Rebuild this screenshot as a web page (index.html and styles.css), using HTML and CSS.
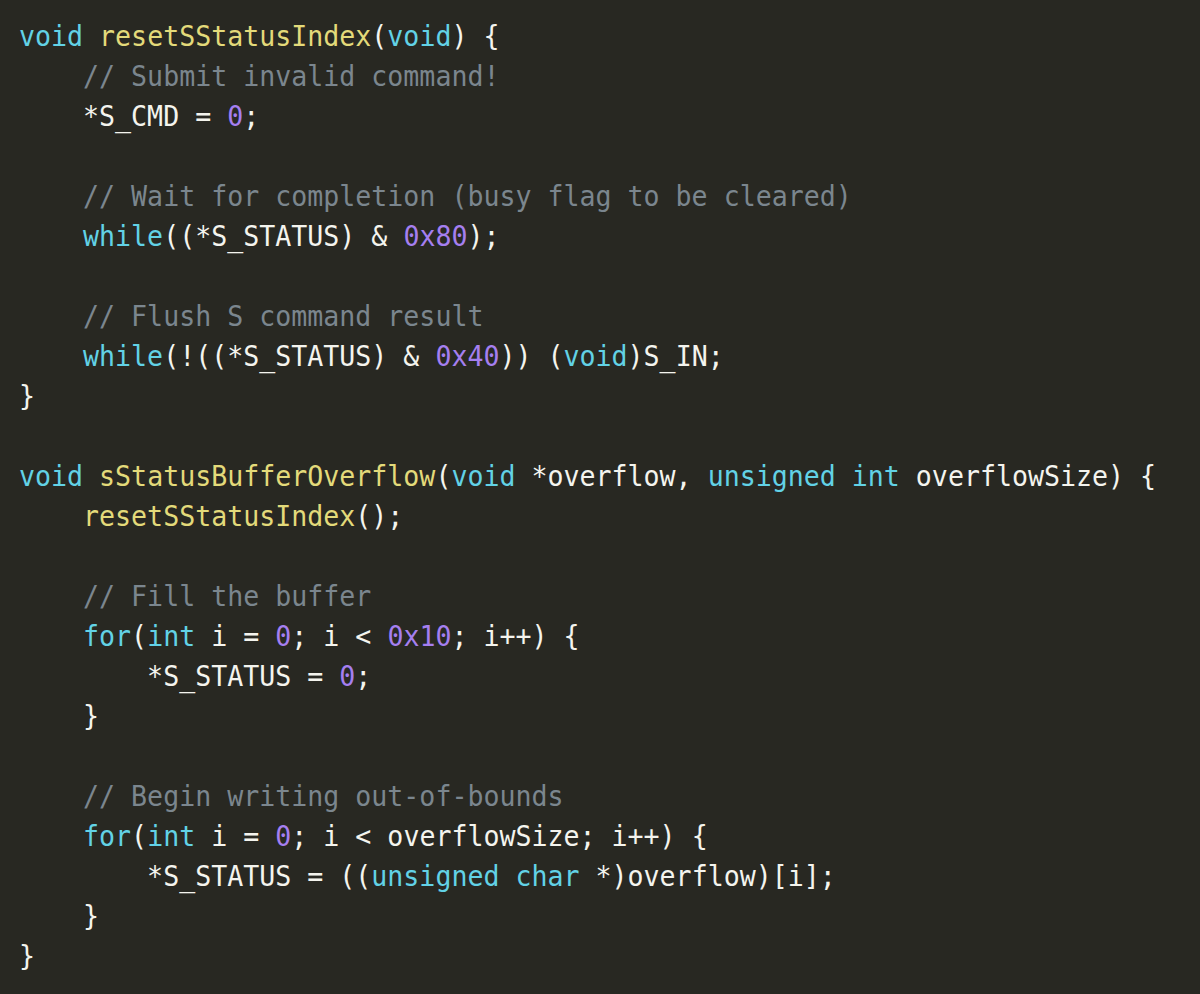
FILE: index.html
```html
<!DOCTYPE html>
<html>
<head>
<meta charset="utf-8">
<link rel="stylesheet" href="styles.css">
</head>
<body>
<div class="code">
<div class="ln"><span class="kw">void</span><span class="p"> </span><span class="fn">resetSStatusIndex</span><span class="p">(</span><span class="kw">void</span><span class="p">) {</span></div>
<div class="ln"><span class="p">    </span><span class="cm">// Submit invalid command!</span></div>
<div class="ln"><span class="p">    *S_CMD = </span><span class="num">0</span><span class="p">;</span></div>
<div class="ln"></div>
<div class="ln"><span class="p">    </span><span class="cm">// Wait for completion (busy flag to be cleared)</span></div>
<div class="ln"><span class="p">    </span><span class="kw">while</span><span class="p">((*S_STATUS) &amp; </span><span class="num">0x80</span><span class="p">);</span></div>
<div class="ln"></div>
<div class="ln"><span class="p">    </span><span class="cm">// Flush S command result</span></div>
<div class="ln"><span class="p">    </span><span class="kw">while</span><span class="p">(!((*S_STATUS) &amp; </span><span class="num">0x40</span><span class="p">)) (</span><span class="kw">void</span><span class="p">)S_IN;</span></div>
<div class="ln"><span class="p">}</span></div>
<div class="ln"></div>
<div class="ln"><span class="kw">void</span><span class="p"> </span><span class="fn">sStatusBufferOverflow</span><span class="p">(</span><span class="kw">void</span><span class="p"> *overflow, </span><span class="kw">unsigned</span><span class="p"> </span><span class="kw">int</span><span class="p"> overflowSize) {</span></div>
<div class="ln"><span class="p">    </span><span class="fn">resetSStatusIndex</span><span class="p">();</span></div>
<div class="ln"></div>
<div class="ln"><span class="p">    </span><span class="cm">// Fill the buffer</span></div>
<div class="ln"><span class="p">    </span><span class="kw">for</span><span class="p">(</span><span class="kw">int</span><span class="p"> i = </span><span class="num">0</span><span class="p">; i &lt; </span><span class="num">0x10</span><span class="p">; i++) {</span></div>
<div class="ln"><span class="p">        *S_STATUS = </span><span class="num">0</span><span class="p">;</span></div>
<div class="ln"><span class="p">    }</span></div>
<div class="ln"></div>
<div class="ln"><span class="p">    </span><span class="cm">// Begin writing out-of-bounds</span></div>
<div class="ln"><span class="p">    </span><span class="kw">for</span><span class="p">(</span><span class="kw">int</span><span class="p"> i = </span><span class="num">0</span><span class="p">; i &lt; overflowSize; i++) {</span></div>
<div class="ln"><span class="p">        *S_STATUS = ((</span><span class="kw">unsigned</span><span class="p"> </span><span class="kw">char</span><span class="p"> *)overflow)[i];</span></div>
<div class="ln"><span class="p">    }</span></div>
<div class="ln"><span class="p">}</span></div>
</div>
</body>
</html>
```

FILE: styles.css
```css
html, body {
  margin: 0;
  padding: 0;
  background: #282822;
  height: 100%;
}
.code {
  padding: 17px 0 0 20px;
  font-family: "DejaVu Sans Mono", monospace;
  font-size: 28px;
  color: #f4f4ee;
  transform: scaleX(0.95);
  transform-origin: 0 0;
}
.ln {
  height: 40px;
  line-height: 40px;
  white-space: pre;
}
.kw { color: #62d2e6; }
.fn { color: #e3da7a; }
.num { color: #a57ff0; }
.cm { color: #7b868e; }
```
